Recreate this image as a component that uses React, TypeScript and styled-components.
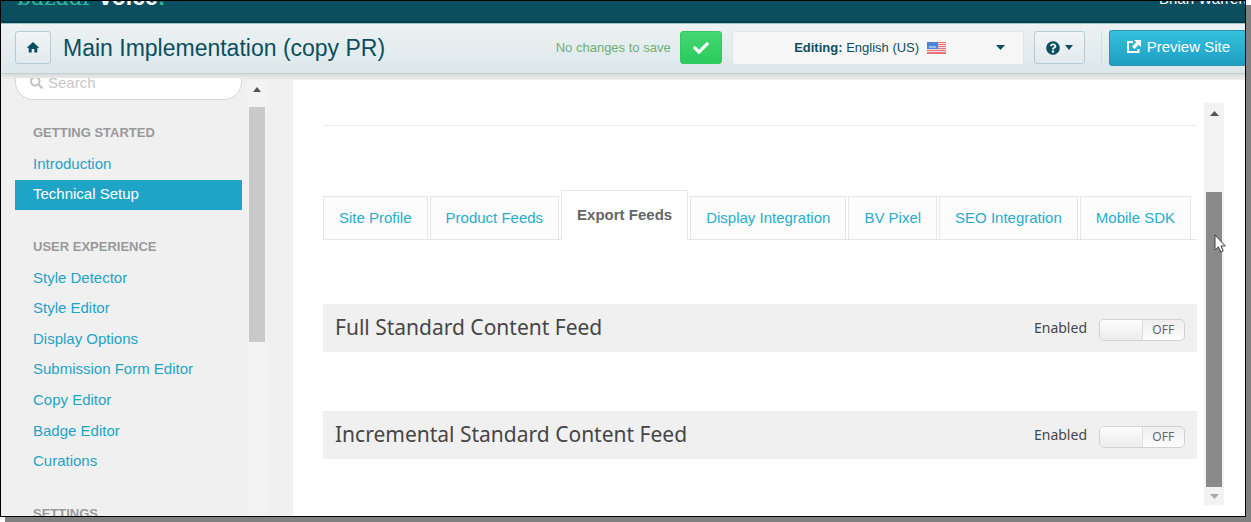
import React, { useState } from "react";
import styled, { createGlobalStyle } from "styled-components";
import { FaCheck, FaQuestionCircle, FaSearch } from "react-icons/fa";

const GlobalStyle = createGlobalStyle`
  *, *::before, *::after { box-sizing: border-box; }
  body {
    margin: 0;
    background: #fff;
    font-family: "Liberation Sans", Arial, sans-serif;
    font-size: 15px;
    color: #464646;
  }
  button { font-family: inherit; cursor: pointer; }
  a { text-decoration: none; }
`;

const teal = "#0b4f5f";
const link = "#1ea4c6";

const Page = styled.div`
  height: 100vh;
  padding: 0 5px 5px 0;
  overflow: hidden;
`;

const Frame = styled.div`
  position: relative;
  display: flex;
  flex-direction: column;
  height: 100%;
  overflow: hidden;
  border: 1px solid #000;
  background: #f0f0f0;
`;

const Shadow = styled.div`
  height: 100%;
  box-shadow: 5px 5px 0 #808080;
`;

const BrandBar = styled.div`
  display: flex;
  flex: none;
  align-items: flex-end;
  justify-content: space-between;
  height: 22px;
  padding: 0 0 12px 16px;
  overflow: hidden;
  background: ${teal};
  border-bottom: 2px solid #073f4d;
`;

const Logo = styled.div`
  font-size: 23px;
  line-height: 22px;
  font-weight: bold;
  color: #fff;
`;

const LogoAccent = styled.span`
  color: #2fb597;
`;

const LogoSlab = styled(LogoAccent)`
  font-family: "DejaVu Serif", serif;
  font-size: 22px;
  font-weight: normal;
`;

const UserName = styled.div`
  width: 86px;
  overflow: hidden;
  white-space: nowrap;
  font-size: 15px;
  line-height: 20px;
  color: #fff;
`;

const Header = styled.header`
  position: relative;
  z-index: 1;
  display: flex;
  flex: none;
  align-items: center;
  height: 51px;
  padding: 0 0 2px 14px;
  background: linear-gradient(#edf2f3, #dce7ea);
  border-top: 1px solid #9fc3cd;
  border-bottom: 1px solid #c8cdd1;
  box-shadow: 0 2px 5px rgba(0, 0, 0, 0.12);
`;

const ToolButton = styled.button<{ $w: number }>`
  display: flex;
  flex: none;
  align-items: center;
  justify-content: center;
  gap: 5px;
  width: ${(p) => p.$w}px;
  height: 33px;
  padding: 0;
  color: ${teal};
  background: linear-gradient(#f1f5f6, #e2eaed);
  border: 1px solid #b5cbd4;
  border-radius: 3px;
`;

const Title = styled.h1`
  flex: 1;
  margin: 0 12px;
  overflow: hidden;
  white-space: nowrap;
  font-size: 23px;
  line-height: 32px;
  font-weight: normal;
  color: ${teal};
`;

const SaveState = styled.span`
  flex: none;
  margin-right: 9px;
  font-size: 13px;
  color: #6bb077;
`;

const SaveButton = styled(ToolButton)`
  color: #fff;
  background: linear-gradient(#43d772, #2bcb5d);
  border-color: #35c964;
`;

const LocaleButton = styled.button`
  display: flex;
  flex: none;
  align-items: center;
  width: 292px;
  height: 34px;
  margin: 0 10px;
  padding: 0 18px 0 12px;
  font-size: 13px;
  color: ${teal};
  background: #f6f6f6;
  border: 1px solid #e3e6e8;
  border-radius: 3px;
`;

const LocaleText = styled.span`
  display: flex;
  flex: 1;
  align-items: center;
  justify-content: center;
  gap: 8px;
`;

const Divider = styled.span`
  flex: none;
  width: 1px;
  height: 36px;
  margin: 0 7px 0 16px;
  background: #cfdfe6;
`;

const PreviewLink = styled.a`
  display: flex;
  flex: none;
  align-items: center;
  gap: 6px;
  height: 36px;
  padding: 0 15px 2px 17px;
  color: #fff;
  background: linear-gradient(#35c0dc, #1e9fc2);
  border: 1px solid #2a94b2;
  border-right: 0;
  border-radius: 3px 0 0 3px;
`;

const Body = styled.div`
  display: flex;
  flex: 1;
  min-height: 0;
`;

const Sidebar = styled.aside`
  flex: none;
  width: 241px;
  margin-top: 4px;
  padding-left: 14px;
  overflow: hidden;
`;

const SearchClip = styled.label`
  display: flex;
  align-items: flex-end;
  height: 22px;
  overflow: hidden;
`;

const SearchBox = styled.span`
  display: flex;
  flex: 1;
  align-items: center;
  gap: 5px;
  min-width: 0;
  height: 36px;
  padding: 1px 14px 0;
  color: #c4c4c4;
  background: #fff;
  border: 1px solid #d6d6d6;
  border-radius: 18px;
`;

const SearchInput = styled.input`
  flex: 1;
  min-width: 0;
  padding: 0;
  font: 15px "Liberation Sans", Arial, sans-serif;
  background: none;
  border: 0;
  outline: 0;
  &::placeholder { color: #c8c8c8; }
`;

const Group = styled.section`
  padding-top: 28px;
  &:first-of-type { padding-top: 24px; }
`;

const GroupTitle = styled.h2`
  margin: 0 0 7px;
  padding-left: 18px;
  font-size: 13px;
  line-height: 18px;
  color: #999;
`;

const NavList = styled.ul<{ $h: number }>`
  display: grid;
  grid-auto-rows: 1fr;
  height: ${(p) => p.$h}px;
  margin: 0;
  padding: 0;
  list-style: none;
`;

const NavLink = styled.a<{ $active?: boolean }>`
  display: flex;
  align-items: center;
  height: 100%;
  padding: 0 0 2px 18px;
  color: ${(p) => (p.$active ? "#fff" : link)};
  background: ${(p) => (p.$active ? link : "none")};
`;

const ScrollTrack = styled.div`
  display: flex;
  flex: none;
  flex-direction: column;
  align-items: center;
  width: 20px;
  background: #f3f3f3;
`;

const SideTrack = styled(ScrollTrack)`
  margin: 6px 26px 0 5px;
`;

const ArrowBox = styled.span<{ $h: number }>`
  display: flex;
  flex: none;
  align-items: center;
  justify-content: center;
  height: ${(p) => p.$h}px;
`;

const Thumb = styled.div<{ $h: string; $top: number; $color: string }>`
  flex: none;
  width: 16px;
  height: ${(p) => p.$h};
  margin-top: ${(p) => p.$top}px;
  background: ${(p) => p.$color};
`;

const Main = styled.main`
  display: flex;
  flex: 1;
  gap: 7px;
  min-width: 0;
  margin-top: 6px;
  padding: 23px 21px 11px 30px;
  background: #fff;
`;

const Content = styled.div`
  flex: 1;
  min-width: 0;
`;

const Rule = styled.hr`
  height: 1px;
  margin: 22px 0 64px;
  background: #ededed;
  border: 0;
`;

const Tabs = styled.div`
  display: flex;
  align-items: flex-end;
  gap: 2px;
  margin-bottom: 64px;
  border-bottom: 1px solid #e6e6e6;
`;

const Tab = styled.button<{ $active: boolean }>`
  flex: none;
  height: ${(p) => (p.$active ? 50 : 44)}px;
  margin-bottom: -1px;
  padding: 0 15px 2px;
  font-size: 15px;
  font-weight: ${(p) => (p.$active ? "bold" : "normal")};
  color: ${(p) => (p.$active ? "#666" : "#27adcb")};
  background: ${(p) => (p.$active ? "#fff" : "#fcfcfc")};
  border: 1px solid #e6e6e6;
  border-bottom-color: ${(p) => (p.$active ? "#fff" : "#e6e6e6")};
`;

const Feed = styled.section`
  display: flex;
  align-items: center;
  height: 48px;
  margin-bottom: 59px;
  padding: 0 12px 2px;
  font-family: "Noto Sans", "Open Sans", sans-serif;
  background: #f0f0f0;
`;

const FeedTitle = styled.h2`
  flex: 1;
  margin: 0;
  font-size: 21px;
  line-height: 30px;
  font-weight: normal;
  color: #464646;
`;

const SwitchLabel = styled.label`
  display: flex;
  align-items: center;
  gap: 12px;
  font-size: 14px;
  cursor: pointer;
`;

const SwitchInput = styled.input`
  position: absolute;
  opacity: 0;
`;

const SwitchTrack = styled.span<{ $on: boolean }>`
  display: flex;
  flex-direction: ${(p) => (p.$on ? "row-reverse" : "row")};
  width: 86px;
  height: 22px;
  margin-top: 6px;
  overflow: hidden;
  font-size: 12px;
  line-height: 20px;
  text-align: center;
  color: #666;
  background: linear-gradient(#eeeeee, #fdfdfd);
  border: 1px solid #d2d2d2;
  border-radius: 5px;
`;

const SwitchKnob = styled.span`
  flex: 1;
  background: linear-gradient(#fdfdfd, #ececec);
  border-right: 1px solid #dedede;
`;

const SwitchText = styled.span`
  flex: 1;
`;

const Pointer = styled.svg`
  position: absolute;
  top: 233px;
  right: 19px;
`;

const Caret = ({ w = 9, up = false, color = teal }: { w?: number; up?: boolean; color?: string }) => (
  <svg width={w} height="5" viewBox="0 0 10 5" preserveAspectRatio="none" aria-hidden="true">
    <path d={up ? "M0 5 5 0l5 5z" : "M0 0h10L5 5z"} fill={color} />
  </svg>
);

const HomeIcon = () => (
  <svg width="12" height="11" viewBox="0 0 12 11" aria-hidden="true">
    <path d="M6 0 12 5.4l-.7.8-1-.8V10.400H7.300V7H4.700v3.400H1.700V5.400l-1 .8L0 5.400z" fill={teal} />
  </svg>
);

const ShareIcon = () => (
  <svg width="14" height="13" viewBox="0 0 14 13" aria-hidden="true">
    <path d="M6 2H1v10h10.500V9" fill="none" stroke="#fff" strokeWidth="2" />
    <path d="M7 0h7v7l-2.300-2.300L7.500 9 5 6.500l4.300-4.200z" fill="#fff" />
  </svg>
);

const Flag = () => (
  <svg width="19" height="12" viewBox="0 0 19 12" role="img" aria-label="US flag">
    <rect width="19" height="12" fill="#f7dedd" />
    {[0, 2, 4, 6, 8, 10].map((y) => (
      <rect key={y} y={y} width="19" height="1" fill="#e8737a" />
    ))}
    <rect y="11" width="19" height="1" fill="#e8737a" />
    <rect width="11" height="7" fill="#4a86d4" />
    <path d="M2 4l1 2 1-2 1 2 1-2 1 2 1-2 1 2" stroke="#a9cdf2" fill="none" />
  </svg>
);

const groups = [
  { title: "GETTING STARTED", height: 61, items: ["Introduction", "Technical Setup"] },
  {
    title: "USER EXPERIENCE",
    height: 214,
    items: ["Style Detector", "Style Editor", "Display Options", "Submission Form Editor", "Copy Editor", "Badge Editor", "Curations"],
  },
  { title: "SETTINGS", height: 0, items: [] },
];

const tabs = ["Site Profile", "Product Feeds", "Export Feeds", "Display Integration", "BV Pixel", "SEO Integration", "Mobile SDK"];

function FeedPanel({ title }: { title: string }) {
  const [on, setOn] = useState(false);
  return (
    <Feed>
      <FeedTitle>{title}</FeedTitle>
      <SwitchLabel>
        Enabled
        <SwitchInput type="checkbox" checked={on} onChange={() => setOn(!on)} />
        <SwitchTrack $on={on}>
          <SwitchKnob />
          <SwitchText>{on ? "ON" : "OFF"}</SwitchText>
        </SwitchTrack>
      </SwitchLabel>
    </Feed>
  );
}

export default function App() {
  const [tab, setTab] = useState("Export Feeds");
  return (
    <Page>
      <GlobalStyle />
      <Shadow>
        <Frame>
          <BrandBar>
            <Logo>
              <LogoSlab>bazaar</LogoSlab> voice<LogoAccent>:</LogoAccent>
            </Logo>
            <UserName>Brian Warren</UserName>
          </BrandBar>
          <Header>
            <ToolButton $w={36} aria-label="Home">
              <HomeIcon />
            </ToolButton>
            <Title>Main Implementation (copy PR)</Title>
            <SaveState>No changes to save</SaveState>
            <SaveButton $w={42} aria-label="Save">
              <FaCheck size={16} />
            </SaveButton>
            <LocaleButton aria-haspopup="listbox">
              <LocaleText>
                <span>
                  <b>Editing:</b> English (US)
                </span>
                <Flag />
              </LocaleText>
              <Caret />
            </LocaleButton>
            <ToolButton $w={51} aria-label="Help">
              <FaQuestionCircle size={14} />
              <Caret w={8} />
            </ToolButton>
            <Divider />
            <PreviewLink href="#preview">
              <ShareIcon />
              Preview Site
            </PreviewLink>
          </Header>
          <Body>
            <Sidebar>
              <SearchClip>
                <SearchBox>
                  <FaSearch size={13} />
                  <SearchInput type="search" placeholder="Search" aria-label="Search" />
                </SearchBox>
              </SearchClip>
              {groups.map((g) => (
                <Group key={g.title}>
                  <GroupTitle>{g.title}</GroupTitle>
                  <NavList $h={g.height}>
                    {g.items.map((item) => (
                      <li key={item}>
                        <NavLink href="#nav" $active={item === "Technical Setup"}>
                          {item}
                        </NavLink>
                      </li>
                    ))}
                  </NavList>
                </Group>
              ))}
            </Sidebar>
            <SideTrack aria-hidden="true">
              <ArrowBox $h={19}>
                <Caret up w={8} color="#555" />
              </ArrowBox>
              <Thumb $h="235px" $top={8} $color="#c9c9c9" />
            </SideTrack>
            <Main>
              <Content>
                <Rule />
                <Tabs role="tablist">
                  {tabs.map((t) => (
                    <Tab key={t} role="tab" aria-selected={t === tab} $active={t === tab} onClick={() => setTab(t)}>
                      {t}
                    </Tab>
                  ))}
                </Tabs>
                <FeedPanel title="Full Standard Content Feed" />
                <FeedPanel title="Incremental Standard Content Feed" />
              </Content>
              <ScrollTrack aria-hidden="true">
                <ArrowBox $h={20}>
                  <Caret up w={9} color="#555" />
                </ArrowBox>
                <Thumb $h="295px" $top={69} $color="#8a8a8a" />
                <ArrowBox $h={18}>
                  <Caret w={9} color="#a8a8a8" />
                </ArrowBox>
              </ScrollTrack>
            </Main>
          </Body>
          <Pointer width="12" height="20" viewBox="0 0 12 20" aria-hidden="true">
            <path d="M1 1v15l3.400-3.200L6.800 18l2.400-1.100L7 12h4.300z" fill="#fff" stroke="#3c3c50" />
          </Pointer>
        </Frame>
      </Shadow>
    </Page>
  );
}
